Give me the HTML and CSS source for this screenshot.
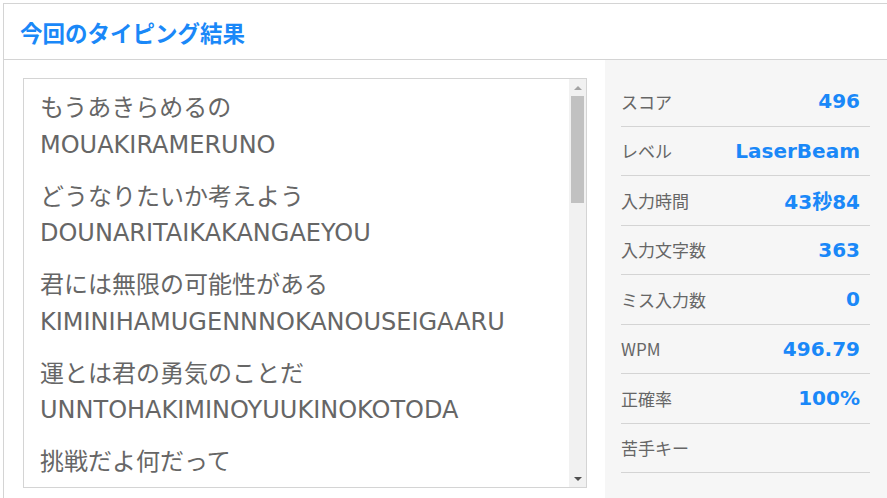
FILE: index.html
```html
<!DOCTYPE html>
<html lang="ja">
<head>
    <meta charset="UTF-8">
    <meta name="viewport" content="width=device-width, initial-scale=1.0">
    <title>今回のタイピング結果</title>
    <link rel="stylesheet" href="styles.css">
</head>
<body>
    <div class="card">
        <div class="card-header">
            <h2 class="card-title">今回のタイピング結果</h2>
        </div>
        <div class="card-body">
            <div class="log-area">
                <div class="log-box">
                    <div class="log-text">
                        <div class="pair">
                            <p>もうあきらめるの</p>
                            <p>MOUAKIRAMERUNO</p>
                        </div>
                        <div class="pair">
                            <p>どうなりたいか考えよう</p>
                            <p>DOUNARITAIKAKANGAEYOU</p>
                        </div>
                        <div class="pair">
                            <p>君には無限の可能性がある</p>
                            <p>KIMINIHAMUGENNNOKANOUSEIGAARU</p>
                        </div>
                        <div class="pair">
                            <p>運とは君の勇気のことだ</p>
                            <p>UNNTOHAKIMINOYUUKINOKOTODA</p>
                        </div>
                        <div class="pair">
                            <p>挑戦だよ何だって</p>
                        </div>
                    </div>
                    <div class="scrollbar">
                        <div class="arrow arrow-up"></div>
                        <div class="thumb"></div>
                        <div class="track"></div>
                        <div class="arrow arrow-down"></div>
                    </div>
                </div>
            </div>
            <div class="stats">
                <div class="stat-row"><span class="stat-label">スコア</span><span class="stat-value">496</span></div>
                <div class="stat-row"><span class="stat-label">レベル</span><span class="stat-value">LaserBeam</span></div>
                <div class="stat-row"><span class="stat-label">入力時間</span><span class="stat-value">43秒84</span></div>
                <div class="stat-row"><span class="stat-label">入力文字数</span><span class="stat-value">363</span></div>
                <div class="stat-row"><span class="stat-label">ミス入力数</span><span class="stat-value">0</span></div>
                <div class="stat-row"><span class="stat-label">WPM</span><span class="stat-value">496.79</span></div>
                <div class="stat-row"><span class="stat-label">正確率</span><span class="stat-value">100%</span></div>
                <div class="stat-row"><span class="stat-label">苦手キー</span><span class="stat-value"></span></div>
            </div>
        </div>
    </div>
</body>
</html>
```

FILE: styles.css
```css
html, body {
    margin: 0;
    overflow: hidden;
    background: #fff;
}
body {
    font-family: "DejaVu Sans", "Noto Sans CJK JP", sans-serif;
    color: #666;
    padding: 3px 0 0 3px;
}
.card {
    width: 900px;
    border: 1px solid #d4d4d4;
}
.card-header {
    height: 55px;
    border-bottom: 1px solid #d4d4d4;
    display: flex;
    align-items: center;
    padding-left: 16px;
}
.card-title {
    margin: 0;
    font-family: "Noto Sans CJK JP", sans-serif;
    font-size: 22.5px;
    font-weight: bold;
    color: #1a88f8;
}
.card-body {
    display: flex;
    height: 460px;
}
.log-area {
    width: 601px;
    padding: 18px 18px 0 19px;
    box-sizing: border-box;
}
.log-box {
    display: flex;
    height: 410px;
    border: 1px solid #d4d4d4;
    box-sizing: border-box;
}
.log-text {
    flex: 1;
    overflow: hidden;
    padding: 11px 0 0 16px;
}
.pair {
    margin-bottom: 15.5px;
}
.pair p {
    margin: 0;
    font-size: 24px;
    line-height: 36.5px;
    white-space: nowrap;
}
.scrollbar {
    width: 17px;
    background: #f1f1f1;
    display: flex;
    flex-direction: column;
}
.arrow {
    height: 17px;
    display: flex;
    align-items: center;
    justify-content: center;
}
.arrow::before {
    content: "";
    border-left: 4px solid transparent;
    border-right: 4px solid transparent;
}
.arrow-up::before {
    border-bottom: 4px solid #a3a3a3;
}
.arrow-down::before {
    border-top: 4px solid #505050;
}
.thumb {
    height: 107px;
    margin: 0 2px;
    background: #c1c1c1;
}
.track {
    flex: 1;
}
.stats {
    width: 282px;
    background: #f6f6f6;
    padding: 17px 0 0 16px;
    box-sizing: border-box;
}
.stat-row {
    width: 239px;
    height: 48.5px;
    border-bottom: 1px solid #d4d4d4;
    display: flex;
    align-items: center;
    justify-content: space-between;
    padding-right: 10px;
}
.stat-label {
    font-family: "Noto Sans CJK JP", sans-serif;
    font-size: 17px;
    color: #666;
}
.stat-value {
    font-size: 20px;
    font-weight: bold;
    color: #1a88f8;
}
```
